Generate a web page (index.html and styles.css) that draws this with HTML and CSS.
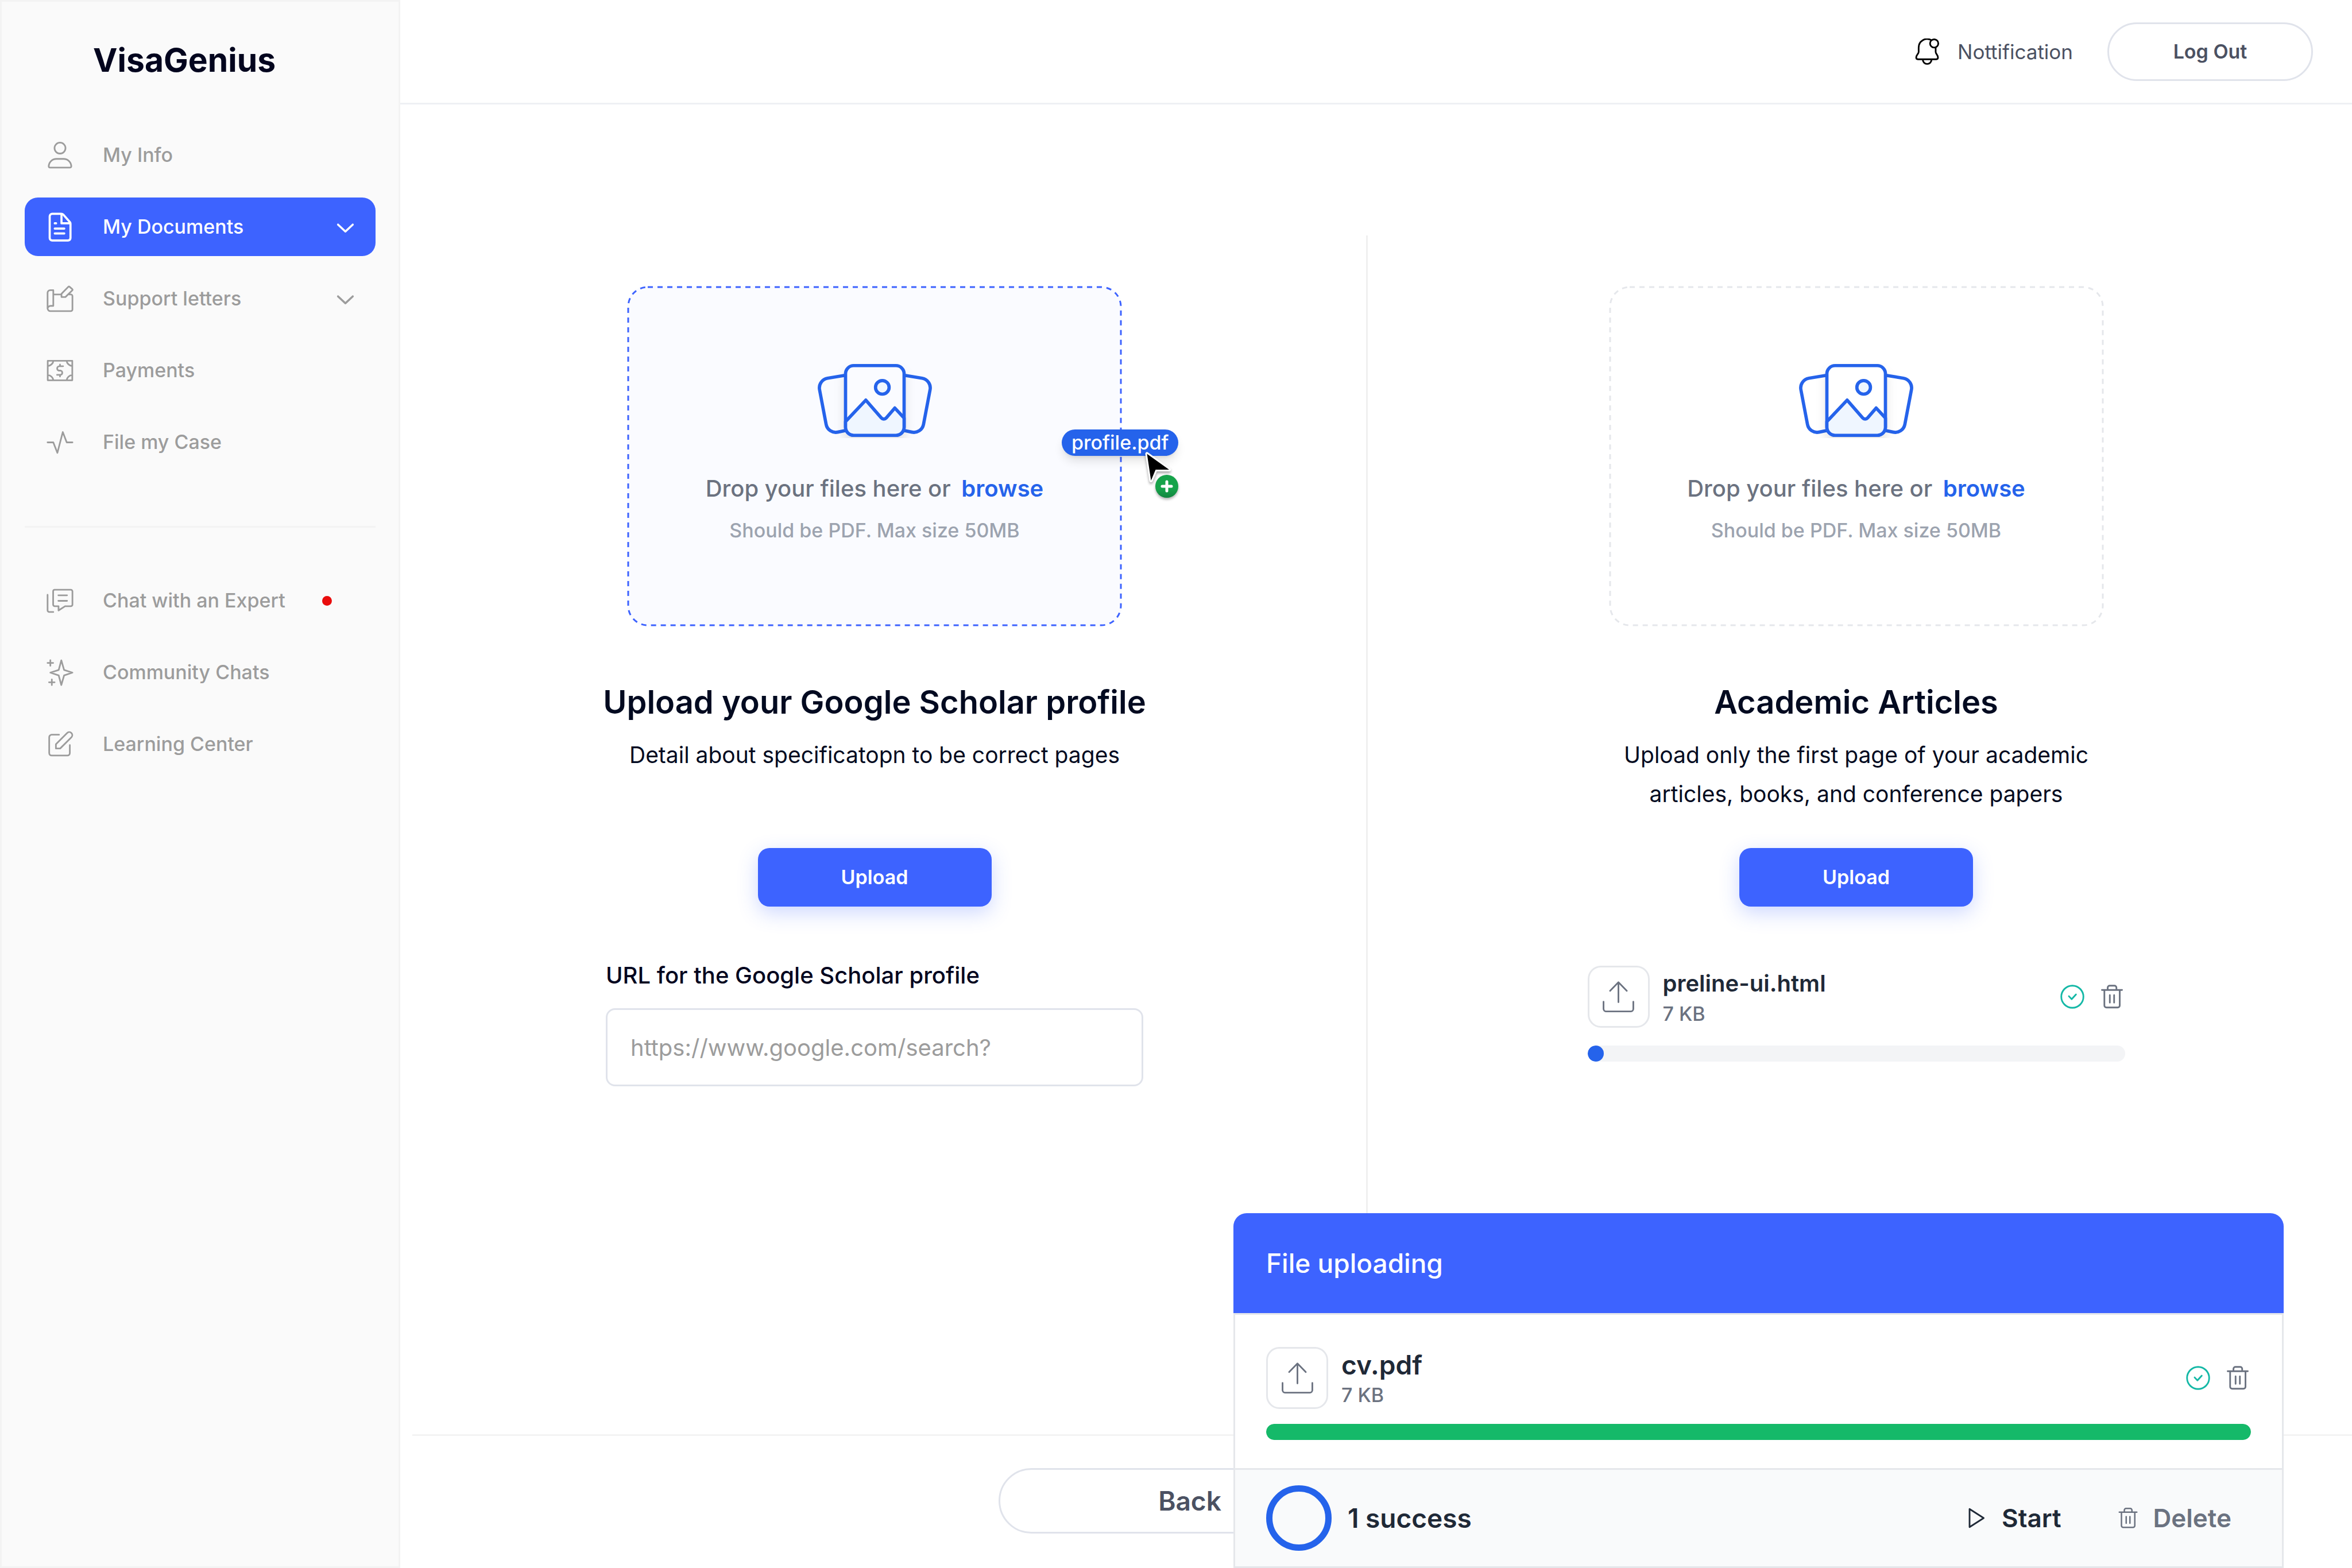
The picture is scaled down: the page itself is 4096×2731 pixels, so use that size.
FILE: index.html
```html
<!DOCTYPE html>
<html lang="en">
<head>
<meta charset="utf-8">
<meta name="viewport" content="width=device-width, initial-scale=1">
<title>VisaGenius – My Documents</title>
<link rel="stylesheet" href="styles.css">
</head>
<body>
<svg class="sprite" aria-hidden="true">
  <symbol id="i-chevron" viewBox="0 0 20 20"><path d="M5.500 8.500 10 12.700l4.500-4.200" stroke-width="1.250"/></symbol>
  <symbol id="i-upload" viewBox="0 0 20 20"><path d="M10 13.200V1M4.900 6.200 10 1l5.100 5.200M.9 12.900v4.400a1.500 1.500 0 0 0 1.500 1.500h15.200a1.500 1.500 0 0 0 1.500-1.500v-4.400"/></symbol>
  <symbol id="i-check" viewBox="0 0 16 16"><circle cx="8" cy="8" r="6.700"/><path d="m5.900 7.700 1.700 1.800 2.600-2.900"/></symbol>
  <symbol id="i-trash" viewBox="0 0 16 16"><path d="M1.900 3.900h12.200M5.400 3.800V2.500a1.200 1.200 0 0 1 1.200-1.200h2.900a1.200 1.200 0 0 1 1.200 1.200v1.300M3.400 4v9.300a1.200 1.200 0 0 0 1.200 1.200h6.900a1.200 1.200 0 0 0 1.200-1.200V4M6.700 7v4.600M9.300 7v4.600"/></symbol>
  <symbol id="i-pictures" viewBox="0 0 70 46">
    <path d="M6.052 9.369 17.213 7.508V41.361L12.302 42.395C9.013 43.087 5.797 40.943 5.171 37.641L1.143 16.405C.516 13.098 2.731 9.922 6.052 9.369Z" fill="var(--card-fill)"/>
    <path d="M63.948 9.369 52.787 7.508V41.361L57.698 42.395C60.987 43.087 64.203 40.943 64.829 37.641L68.857 16.405C69.484 13.098 67.269 9.922 63.948 9.369Z" fill="var(--card-fill)"/>
    <g class="picture-card">
      <rect x="17.066" y="1.623" width="35.869" height="42.754" rx="5" fill="var(--card-fill)"/>
      <path d="M47.934 44.377H22.066C19.304 44.377 17.066 42.139 17.066 39.377V35.916L29.472 22.768L38.983 33.712C39.783 34.634 41.215 34.629 42.010 33.703L47.246 27.600L52.934 33.721V39.377C52.934 42.139 50.696 44.377 47.934 44.377Z" fill="#eff6ff"/>
      <circle cx="39.590" cy="14.967" r="4.164" fill="#eff6ff"/>
    </g>
  </symbol>
</svg>

<div class="app">
  <aside class="sidebar">
    <a class="logo" href="#">VisaGenius</a>
    <nav class="nav">
      <a class="nav-item" href="#">
        <svg class="icon-lg" viewBox="0 0 20 20"><circle cx="10" cy="5.600" r="3.350"/><path d="M7.800 12.200h4.400a4.700 4.700 0 0 1 4.700 4.500.8.8 0 0 1-.8.8H3.900a.8.8 0 0 1-.8-.8 4.700 4.700 0 0 1 4.700-4.500z"/></svg>
        <span>My Info</span>
      </a>
      <a class="nav-item active" href="#">
        <svg class="icon-lg" viewBox="0 0 20 20"><g stroke-width="1.300"><path d="M5.300 1.900h5.500c.5 0 .9.200 1.200.5l4 4.500c.3.300.4.600.4 1v8.800a1.500 1.500 0 0 1-1.500 1.500H5.300a1.500 1.500 0 0 1-1.600-1.500V3.400a1.500 1.500 0 0 1 1.600-1.500z"/><path d="M10.900 2.200v5.500h5.300M6.800 7.700h.8M6.800 10.900h5.800M6.800 13.900h5.800"/></g></svg>
        <span>My Documents</span>
        <svg class="icon-lg chevron"><use href="#i-chevron"/></svg>
      </a>
      <a class="nav-item" href="#">
        <svg class="icon-lg" viewBox="0 0 20 20"><path d="M5.900 4.700v9.600H4.300a1.900 1.900 0 0 0-1.900 1.700V6.300a1.600 1.600 0 0 1 1.600-1.600zM2.400 15.800a1.700 1.700 0 0 0 1.700 1.700h12.500a1 1 0 0 0 1-1V8.300a1 1 0 0 0-1-1h-1M5.900 7.300h4.900M10.900 8.900V6.900l4.200-4.300a.5.500 0 0 1 .7 0l1.700 1.500a.5.500 0 0 1 0 .7l-4.200 4.100z"/></svg>
        <span>Support letters</span>
        <svg class="icon-lg chevron"><use href="#i-chevron"/></svg>
      </a>
      <a class="nav-item" href="#">
        <svg class="icon-lg" viewBox="0 0 20 20"><path d="M2.500 4h15v11.900h-15zM6 4a3.900 3.900 0 0 1-3.500 3.200M14 4a3.900 3.900 0 0 0 3.500 3.200M2.500 12.700A3.900 3.900 0 0 1 6 15.900M17.500 12.700a3.900 3.900 0 0 0-3.500 3.200M11.900 7.300H9.600a1.350 1.350 0 0 0 0 2.700h.8a1.350 1.350 0 0 1 0 2.600H8.200M10 6.300v1M10 12.600v1"/></svg>
        <span>Payments</span>
      </a>
      <a class="nav-item" href="#">
        <svg class="icon-lg" viewBox="0 0 20 20"><path d="M2.400 10h3.500l2.500 6.400L11.700 3.700l2.400 6.300h3.500"/></svg>
        <span>File my Case</span>
      </a>
    </nav>
    <hr class="nav-rule">
    <nav class="nav">
      <a class="nav-item" href="#">
        <svg class="icon-lg" viewBox="0 0 20 20"><path d="M6.600 3.200h10a1 1 0 0 1 1 1v8.100a1 1 0 0 1-1 1h-3.500l-4 2.600v-2.600H6.800a1 1 0 0 1-1-1V4.200a1 1 0 0 1 .8-1zM9 6.600h5.300M9 10h5.300M2.400 6.300v9.500a1 1 0 0 0 1 1h2.500"/></svg>
        <span>Chat with an Expert</span>
        <span class="unread" role="img" aria-label="New messages"></span>
      </a>
      <a class="nav-item" href="#">
        <svg class="icon-lg" viewBox="0 0 20 20"><path d="m10.800 2.500 1.700 5.900 5.100 1.600-5.100 1.700-1.700 5.900-1.600-5.900L4.100 10l5.100-1.600zM4.100 2.400v3.400M2.400 4.100h3.400M5 14.200v3.400M3.300 15.900h3.400"/></svg>
        <span>Community Chats</span>
      </a>
      <a class="nav-item" href="#">
        <svg class="icon-lg" viewBox="0 0 20 20"><path d="M9.400 4.100H4.900a1.500 1.500 0 0 0-1.500 1.500v9.700a1.500 1.500 0 0 0 1.500 1.500h9.600a1.500 1.500 0 0 0 1.500-1.500v-4.900M7.500 12.500v-2.600l7-7a1.850 1.850 0 0 1 2.600 2.600l-7 7z"/></svg>
        <span>Learning Center</span>
      </a>
    </nav>
  </aside>

  <div class="page">
    <header class="topbar">
      <a class="notify" href="#">
        <svg class="icon-md" viewBox="0 0 16 16"><path d="M10.300.9A5.100 5.100 0 0 0 2.900 5.500v2.700c0 1-1.500 1.800-1.500 3.300 0 .7.400 1.100 1 1.100h11.200c.6 0 1-.4 1-1.100 0-1.500-1.400-2.300-1.400-3.300V5.700M5.400 12.800a2.650 2.650 0 0 0 5.300 0"/><circle cx="12.300" cy="3" r="2.500"/></svg>
        <span>Nottification</span>
      </a>
      <button class="pill-button logout" type="button">Log Out</button>
    </header>

    <main class="columns">
      <section class="column">
        <div class="dropzone dragging">
          <svg class="frame" aria-hidden="true"><rect class="frame-line" x="2" y="2" rx="34"/></svg>
          <svg class="pictures"><use href="#i-pictures"/></svg>
          <p class="drop-text">Drop your files here or <a href="#">browse</a></p>
          <p class="drop-hint">Should be PDF. Max size 50MB</p>
          <div class="drag-ghost">
            <span class="drag-name">profile.pdf</span>
            <svg class="drag-cursor" viewBox="0 0 70 84">
              <defs>
                <linearGradient id="disc-shade" x1="0" y1="0" x2="0" y2="1">
                  <stop offset="0.600" stop-color="#16a34a"/>
                  <stop offset="1" stop-color="#138540"/>
                </linearGradient>
              </defs>
              <circle class="plus-disc" cx="44" cy="60" r="20" fill="url(#disc-shade)"/>
              <path class="plus-sign" d="M44 52v16M36 60h16"/>
              <path class="arrow" d="M9.500 3.500 16.500 50 24.500 31H48Z"/>
            </svg>
          </div>
        </div>
        <h2 class="title">Upload your Google Scholar profile</h2>
        <p class="detail">Detail about specificatopn to be correct pages</p>
        <button class="upload-button" type="button">Upload</button>
        <div class="field">
          <label for="scholar-url">URL for the Google Scholar profile</label>
          <input id="scholar-url" type="url" placeholder="https://www.google.com/search?">
        </div>
      </section>

      <section class="column">
        <div class="dropzone">
          <svg class="frame" aria-hidden="true"><rect class="frame-line" x="2" y="2" rx="34"/></svg>
          <svg class="pictures"><use href="#i-pictures"/></svg>
          <p class="drop-text">Drop your files here or <a href="#">browse</a></p>
          <p class="drop-hint">Should be PDF. Max size 50MB</p>
        </div>
        <h2 class="title">Academic Articles</h2>
        <p class="detail">Upload only the first page of your academic articles, books, and conference papers</p>
        <button class="upload-button" type="button">Upload</button>
        <div class="file">
          <div class="file-row">
            <span class="file-icon"><svg class="icon-lg"><use href="#i-upload"/></svg></span>
            <div class="file-info">
              <strong>preline-ui.html</strong>
              <small>7 KB</small>
            </div>
            <svg class="icon-md done" role="img" aria-label="Uploaded"><use href="#i-check"/></svg>
            <button class="icon-button" type="button" aria-label="Delete preline-ui.html"><svg class="icon-md"><use href="#i-trash"/></svg></button>
          </div>
          <div class="bar" role="progressbar" aria-label="preline-ui.html" aria-valuenow="3"><span class="bar-fill" style="width: 3%"></span></div>
        </div>
      </section>
    </main>

    <footer class="page-footer">
      <button class="pill-button back" type="button">Back</button>
    </footer>
  </div>
</div>

<section class="panel" aria-label="File uploading">
  <h3 class="panel-head">File uploading</h3>
  <div class="file panel-body">
    <div class="file-row">
      <span class="file-icon"><svg class="icon-lg"><use href="#i-upload"/></svg></span>
      <div class="file-info">
        <strong>cv.pdf</strong>
        <small>7 KB</small>
      </div>
      <svg class="icon-md done" role="img" aria-label="Uploaded"><use href="#i-check"/></svg>
      <button class="icon-button" type="button" aria-label="Delete cv.pdf"><svg class="icon-md"><use href="#i-trash"/></svg></button>
    </div>
    <div class="bar complete" role="progressbar" aria-label="cv.pdf" aria-valuenow="100"><span class="bar-fill" style="width: 100%"></span></div>
  </div>
  <div class="panel-foot">
    <span class="ring"></span>
    <span class="status">1 success</span>
    <button class="text-button start" type="button">
      <svg class="icon-sm" viewBox="0 0 14 14"><path d="M2.800 1.500v11L11.400 7z"/></svg>Start
    </button>
    <button class="text-button" type="button">
      <svg class="icon-sm"><use href="#i-trash"/></svg>Delete
    </button>
  </div>
</section>
</body>
</html>
```
FILE: styles.css
```css
:root {
  --blue: #3d63ff;
  --blue-deep: #2563eb;
  --ink: #020a20;
  --slate: #1f2937;
  --gray: #6b7280;
  --muted: #9c9c9c;
  --line: #f3f3f3;
  --border: #e5e7eb;
  --outline: #e0e3eb;
}

* { box-sizing: border-box; }

body {
  margin: 0;
  background: #fff;
  color: var(--ink);
  font-family: Inter, "Liberation Sans", sans-serif;
  font-size: 34px;
  line-height: 48px;
  font-optical-sizing: none;
}

h2, h3, p { margin: 0; }
a { color: inherit; text-decoration: none; }
button { padding: 0; border: 0; background: none; color: inherit; font: inherit; cursor: pointer; }

svg { display: block; flex: none; fill: none; stroke: currentColor; stroke-linecap: round; stroke-linejoin: round; }
.sprite { position: absolute; width: 0; height: 0; }
.icon-lg { width: 57px; height: 57px; stroke-width: 1px; }
.icon-md { width: 46px; height: 46px; stroke-width: 1px; }
.icon-sm { width: 40px; height: 40px; stroke-width: 1px; }

.app { display: grid; grid-template-columns: 697px 1fr; min-height: 100vh; }

/* Sidebar */
.sidebar { padding: 68px 40px; border: 3px solid var(--line); background: #fafafa; }
.logo { display: block; margin: 0 0 80px 119px; font-size: 57px; line-height: 68px; font-weight: 700; color: #03051e; }
.nav { display: grid; gap: 23px; }
.nav-item {
  display: flex;
  align-items: center;
  gap: 46px;
  height: 102px;
  padding: 0 24px 0 33px;
  border-radius: 23px;
  color: var(--muted);
  font-weight: 500;
}
.nav-item.active { background: var(--blue); color: #fff; }
.chevron { margin-left: auto; }
.unread { width: 17px; height: 17px; margin-left: 18px; border-radius: 50%; background: #e90c0c; }
.nav-rule { height: 3px; margin: 95px 0 76px; border: 0; background: var(--line); }

/* Top bar */
.page { display: flex; flex-direction: column; min-width: 0; }
.topbar {
  display: flex;
  align-items: center;
  justify-content: flex-end;
  gap: 60px;
  height: 182px;
  padding-right: 68px;
  border-bottom: 3px solid #eef0f4;
}
.notify { display: flex; align-items: center; gap: 30px; color: #4b5162; font-size: 35px; }
.notify svg { color: #000; }
.pill-button { border: 3px solid var(--outline); border-radius: 60px; background: #fff; color: #4b5162; font-weight: 600; }
.logout { width: 358px; height: 102px; }

/* Upload columns */
.columns { flex: 1; display: grid; grid-template-columns: 1fr 1fr; padding: 228px 35px 60px 0; }
.column { display: flex; flex-direction: column; align-items: center; padding: 88px 30px 0 0; }
.column + .column { padding: 88px 0 0 22px; border-left: 3px solid #f0f0f0; }

.dropzone {
  --card-fill: #fff;
  position: relative;
  display: flex;
  flex-direction: column;
  align-items: center;
  width: 862px;
  padding: 134px 0 143px;
  border-radius: 36px;
  color: #e5e7eb;
}
.dropzone.dragging { --card-fill: #fafbff; background: #fafbff; color: var(--blue); }
.frame { position: absolute; inset: 0; width: 100%; height: 100%; }
.frame-line { width: calc(100% - 4px); height: calc(100% - 4px); stroke-width: 3px; stroke-dasharray: 9 8; stroke-linecap: butt; }
.pictures { width: 199px; height: 131px; margin-bottom: 60px; overflow: visible; color: var(--blue-deep); stroke-width: 2px; }
.picture-card { filter: drop-shadow(0 4px 3px rgba(0, 0, 0, 0.1)); }
.drop-text { margin-bottom: 21px; font-size: 40px; line-height: 56px; font-weight: 500; color: var(--gray); }
.drop-text a { margin-left: 8px; font-weight: 600; color: var(--blue-deep); }
.drop-hint { font-weight: 500; color: #9ca3af; }

.drag-ghost { position: absolute; left: 757px; top: 250px; }
.drag-name {
  display: block;
  padding: 0 17px;
  border-radius: 23px;
  background: var(--blue-deep);
  box-shadow: 0 11px 17px -3px rgba(0, 0, 0, 0.12), 0 4px 6px -4px rgba(0, 0, 0, 0.12);
  color: #fff;
  font-weight: 500;
  line-height: 46px;
}
.drag-cursor { position: absolute; left: 139px; top: 39px; width: 70px; height: 84px; overflow: visible; }
.plus-disc { stroke: none; filter: drop-shadow(0 3px 2px rgba(0, 0, 0, 0.3)); }
.plus-sign { stroke: #fff; stroke-width: 5px; }
.arrow { fill: #000; stroke: #fff; stroke-width: 6px; paint-order: stroke; filter: drop-shadow(0 3px 2px rgba(0, 0, 0, 0.35)); }

.title { margin-top: 92px; font-size: 56px; line-height: 80px; font-weight: 600; }
.detail { width: 936px; min-height: 136px; margin: 18px 0 60px; font-size: 39px; line-height: 68px; text-align: center; }
.upload-button {
  width: 407px;
  height: 102px;
  border-radius: 20px;
  background: var(--blue);
  box-shadow: 0 11px 34px rgba(61, 99, 255, 0.25);
  color: #fff;
  font-weight: 600;
}

.field { display: grid; gap: 33px; width: 936px; margin-top: 96px; font-size: 40px; }
.field label { font-weight: 500; color: #03051e; }
.field input {
  width: 100%;
  height: 136px;
  padding: 0 40px;
  border: 3px solid var(--outline);
  border-radius: 16px;
  background: #fff;
  color: var(--ink);
  font: inherit;
}
.field input::placeholder { color: var(--muted); opacity: 1; }

/* File rows */
.file { display: grid; gap: 31px; width: 936px; margin-top: 103px; }
.file-row { display: flex; align-items: center; gap: 23px; }
.file-icon { display: grid; place-items: center; width: 108px; height: 108px; border: 3px solid var(--border); border-radius: 23px; background: #fff; color: var(--gray); }
.file-info { display: grid; flex: 1; gap: 5px; padding-top: 7px; }
.file-info strong { font-size: 40px; font-weight: 600; color: var(--slate); }
.file-info small { font-size: 34px; font-weight: 500; color: var(--gray); }
.done { color: #14b8a6; }
.icon-button { color: var(--gray); }
.bar { height: 28px; border-radius: 14px; background: #f3f4f6; overflow: hidden; }
.bar-fill { display: block; height: 100%; border-radius: 14px; background: var(--blue-deep); }
.complete .bar-fill { background: #15b969; }

/* Page footer */
.page-footer { height: 233px; margin-left: 21px; padding: 56px 0 0 1021px; border-top: 3px solid var(--line); }
.back { width: 666px; height: 114px; font-size: 46px; }

/* Uploading panel */
.panel { position: fixed; right: 119px; bottom: 0; width: 1829px; max-width: 100%; border-bottom: 3px solid var(--border); }
.panel-head { padding: 0 57px; border-radius: 23px 23px 0 0; background: var(--blue); color: #fff; font-size: 46px; line-height: 174px; font-weight: 500; }
.panel-body { gap: 26px; width: auto; margin: 0; padding: 56px 54px 49px; border: 3px solid var(--border); background: #fff; }
.panel-body strong { font-size: 46px; }
.panel-foot {
  display: flex;
  align-items: center;
  gap: 28px;
  height: 168px;
  padding: 0 54px;
  border: solid var(--border);
  border-width: 0 3px;
  background: #f9fafb;
  color: var(--slate);
  font-size: 46px;
  font-weight: 600;
}
.ring { width: 114px; height: 114px; border: 11px solid var(--blue-deep); border-radius: 50%; }
.status { flex: 1; }
.text-button { display: flex; align-items: center; gap: 24px; padding: 0 34px; color: var(--gray); font-size: 44px; }
.text-button.start { color: var(--slate); }
```
